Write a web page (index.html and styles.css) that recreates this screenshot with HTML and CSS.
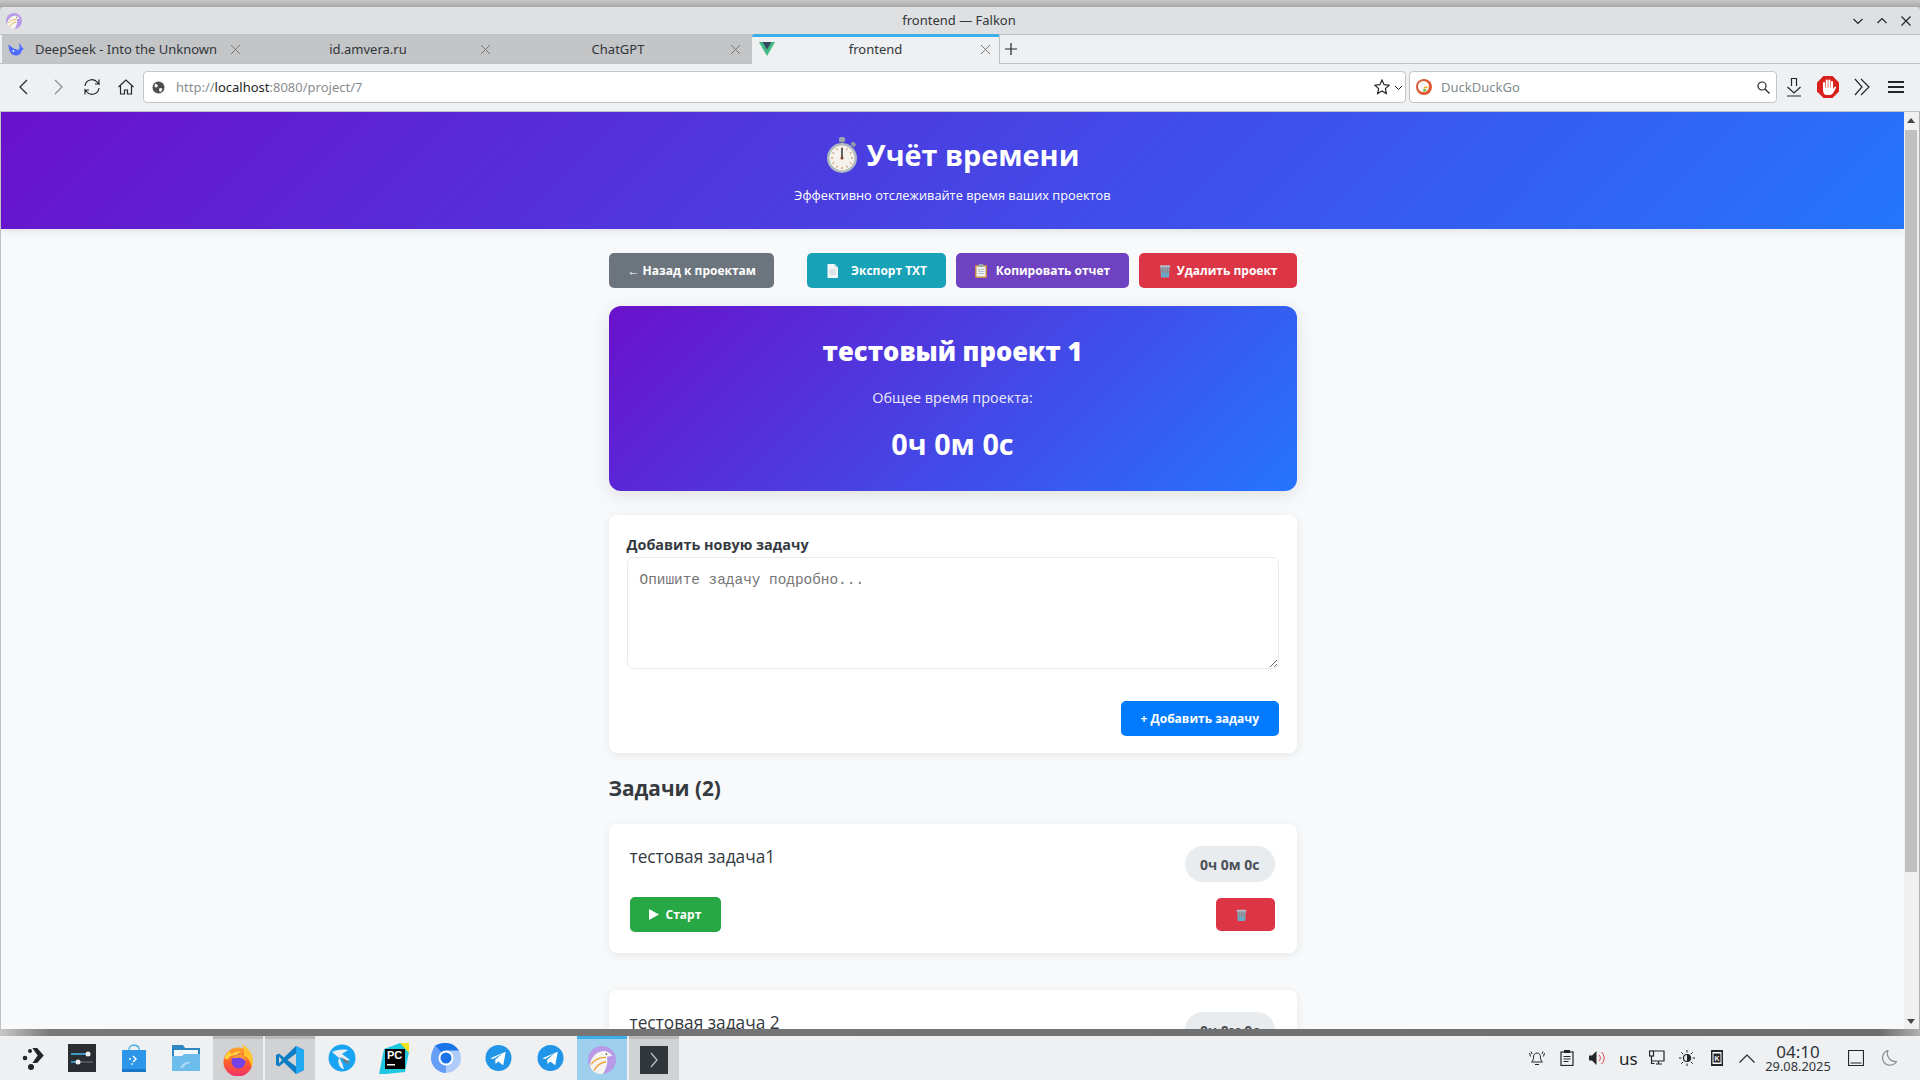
FILE: index.html
```html
<!DOCTYPE html>
<html lang="ru">

<head>
    <meta charset="UTF-8">
    <title>frontend — Falkon</title>
    <link rel="stylesheet" href="styles.css">
</head>

<body>
    <svg class="defs" width="0" height="0">
        <defs>
            <linearGradient id="foxBody" x1="0" y1="0" x2="0" y2="1">
                <stop offset="0" stop-color="#ffa42e"/>
                <stop offset="0.55" stop-color="#ff5a2d"/>
                <stop offset="1" stop-color="#f0306e"/>
            </linearGradient>
        </defs>
        <symbol id="trash" viewBox="0 0 16 16">
            <path d="M2.500 3h11l-1.200 12H3.700z" fill="#9aa3ad"/>
            <path d="M3.200 10h9.600l-.5 5H3.700z" fill="#5fb6d6"/>
            <path d="M5 4l.6 10M8 4v10M11 4l-.6 10M3 6.500h10M3.200 9h9.600" stroke="#777f8a" stroke-width=".6" fill="none"/>
            <rect x="2" y="1.500" width="12" height="2" rx=".8" fill="#b9bfc6"/>
        </symbol>
        <symbol id="telegram" viewBox="0 0 28 28">
            <circle cx="14" cy="14" r="13.500" fill="#2196e8"/>
            <path d="M5.500 14.200L21.500 7.500l-2.600 14-5.200-3.900-2.700 2.700-.5-4.500 8-6.800-10 6.100z" fill="#fff"/>
        </symbol>
        <symbol id="falkon" viewBox="0 0 16 16">
            <circle cx="8" cy="8" r="8" fill="#b79be8"/>
            <path d="M1 11C1.500 7 4.500 3 9 2.800c1.500 0 3 .8 5 2.700l-3.200.6c.8 3.400-.3 6.800-2.300 9.900C5 16.300 2 14.500 1 11z" fill="#f6f4ee"/>
            <path d="M1.800 10.500C4 7.500 7 6.300 10.300 6.500M3.500 14c1.500-3 3.500-4.500 6.800-5" stroke="#eba53c" stroke-width=".8" fill="none"/>
            <circle cx="10.500" cy="4.600" r=".5" fill="#555"/>
        </symbol>
    </svg>

    <div class="desktop-top"></div>

    <div class="titlebar">
        <svg class="title-icon" width="16" height="16"><use href="#falkon"/></svg>
        <span class="title-text">frontend — Falkon</span>
        <div class="win-btns">
            <svg width="12" height="12" viewBox="0 0 12 12"><path d="M1.500 4L6 8.500 10.500 4" class="ln"/></svg>
            <svg width="12" height="12" viewBox="0 0 12 12"><path d="M1.500 8L6 3.500 10.500 8" class="ln"/></svg>
            <svg width="12" height="12" viewBox="0 0 12 12"><path d="M1.500 1.500l9 9M10.500 1.500l-9 9" class="ln"/></svg>
        </div>
    </div>

    <div class="tabbar">
        <div class="tab">
            <svg class="fav" width="16" height="16" viewBox="0 0 16 16">
                <path d="M.5 3.500C.5 9 2.500 14.500 8 14.500c3.500 0 5.500-2.500 5.500-5 1 0 1.800-1 2-2.500l-1.500-.3C13.500 4.500 12.500 3 10.500 2.500c1.500 2 1.500 4.500 0 6.500C7 8.500 3.500 6.500.5 3.500z" fill="#4d6bfe"/>
                <circle cx="5.500" cy="10" r=".9" fill="#fff"/>
            </svg>
            <span class="tab-name">DeepSeek - Into the Unknown</span>
            <span class="tab-x"></span>
        </div>
        <div class="tab">
            <span class="tab-name tab-center">id.amvera.ru</span>
            <span class="tab-x"></span>
        </div>
        <div class="tab">
            <span class="tab-name tab-center">ChatGPT</span>
            <span class="tab-x"></span>
        </div>
        <div class="tab tab-active">
            <svg class="fav" width="16" height="16" viewBox="0 0 16 16">
                <path d="M0 1h16L8 15z" fill="#41b883"/>
                <path d="M3.500 1h9L8 8.500z" fill="#34495e"/>
            </svg>
            <span class="tab-name tab-center">frontend</span>
            <span class="tab-x"></span>
        </div>
        <svg class="new-tab" width="12" height="12" viewBox="0 0 12 12"><path d="M6 0v12M0 6h12" class="ln"/></svg>
    </div>

    <div class="toolbar">
        <div class="nav-btns">
            <svg width="20" height="20" viewBox="0 0 20 20"><path d="M13 3l-7 7 7 7" class="ln"/></svg>
            <svg width="20" height="20" viewBox="0 0 20 20"><path d="M7 3l7 7-7 7" class="ln ln-off"/></svg>
            <svg width="20" height="20" viewBox="0 0 20 20"><path d="M3 9a7 7 0 0 1 12.500-3.500L17 7V2.500M17 11a7 7 0 0 1-12.500 3.500L3 13v4.500M17 7h-4M3 13h4" class="ln"/></svg>
            <svg class="home" width="18" height="18" viewBox="0 0 18 18"><path d="M1.500 9L9 2l7.500 7M3.500 8v8h4v-4h3v4h4V8" class="ln"/></svg>
        </div>
        <div class="urlbar">
            <svg width="13" height="13" viewBox="0 0 13 13">
                <circle cx="6.500" cy="6.500" r="6" fill="#4d4d4d"/>
                <path d="M3 2.500l3 1.500-1 2.500L2.500 6zM7.500 7l3 .5L9 11 7 10z" fill="#fff"/>
            </svg>
            <span class="url"><span class="url-dim">http://</span>localhost<span class="url-dim">:8080/project/7</span></span>
            <svg class="star" width="16" height="16" viewBox="0 0 16 16"><path d="M8 1l2.100 4.700 5 .5-3.700 3.400 1 5L8 12l-4.400 2.600 1-5L.9 6.200l5-.5z" class="ln"/></svg>
            <svg width="9" height="9" viewBox="0 0 9 9"><path d="M1 3l3.500 3.500L8 3" class="ln ln-thin"/></svg>
        </div>
        <div class="searchbar">
            <svg width="16" height="16" viewBox="0 0 16 16">
                <circle cx="8" cy="8" r="8" fill="#de5833"/>
                <circle cx="7.500" cy="7.500" r="5.500" fill="#fff"/>
                <path d="M5 4c2-1 4 0 4 2.500 0 1.500.5 3 .5 5.500-1.500 1-3 1-3.500 0C6 9.500 5.500 7 5 4z" fill="#f5f5f5" stroke="#ddd" stroke-width=".4"/>
                <path d="M8 8l3.500-.8v1.800L8 9.500z" fill="#f2b01e"/>
                <path d="M7 10.500l3-.5.500 1.500-3 1z" fill="#5cb531"/>
            </svg>
            <span class="search-name">DuckDuckGo</span>
            <svg class="search-ico" width="13" height="13" viewBox="0 0 13 13"><circle cx="5" cy="5" r="4" class="ln"/><path d="M8 8l4.500 4.500" class="ln"/></svg>
        </div>
        <div class="tool-btns">
            <svg width="16" height="20" viewBox="0 0 16 20"><path d="M5.500 9V1.500h5V9M1.500 10l6.500 6 6.500-6M1 19h14" class="ln"/></svg>
            <svg width="22" height="22" viewBox="0 0 22 22">
                <path d="M6.500 0h9L22 6.500v9L15.500 22h-9L0 15.500v-9z" fill="#d8201c"/>
                <path d="M7 12V7M9.700 11V4.500M12.400 11V4.500M15 12V6" stroke="#fff" stroke-width="2.100" stroke-linecap="round"/>
                <path d="M6 11.500h10v1.500l1.500-2c.9-1 2 0 1.400 1l-2.500 4.500c-.8 1.600-2 2.500-3.500 2.500H10c-2.500 0-4-2-4-5z" fill="#fff"/>
            </svg>
            <svg class="more" width="16" height="18" viewBox="0 0 16 18"><path d="M1 1l7 8-7 8M7 1l8 8-8 8" class="ln"/></svg>
            <div class="burger"><i></i><i></i><i></i></div>
        </div>
    </div>

    <div class="viewport">
        <div class="page">
            <header class="app-header">
                <h1>
                    <svg class="emoji-watch" width="32" height="36" viewBox="0 0 32 36">
                        <rect x="13" y="0" width="6" height="5" rx="1.500" fill="#9aa5ad"/>
                        <rect x="15" y="4" width="2" height="4" fill="#7c878f"/>
                        <rect x="25" y="5" width="5" height="4" rx="1.500" transform="rotate(40 27 7)" fill="#8f9aa2"/>
                        <circle cx="16" cy="21" r="15" fill="#aeb8bf"/>
                        <circle cx="16" cy="21" r="12.500" fill="#f4f2ec"/>
                        <path d="M16 10v2M16 30v2M5 21h2M25 21h2M10.500 11.500l1 1.700M21.500 11.500l-1 1.700M10.500 30.500l1-1.700M21.500 30.500l-1-1.700M6.500 15.500l1.700 1M25.500 15.500l-1.700 1M6.500 26.500l1.700-1M25.500 26.500l-1.700-1" stroke="#c9763e" stroke-width="1"/>
                        <path d="M16 11v11" stroke="#333" stroke-width="1.500"/>
                        <circle cx="16" cy="21" r="1.500" fill="#8a3b2a"/>
                    </svg>
                    Учёт времени
                </h1>
                <p>Эффективно отслеживайте время ваших проектов</p>
            </header>

            <main class="container">
                <div class="actions">
                    <button class="btn btn-gray">← Назад к проектам</button>
                    <div class="actions-right">
                        <button class="btn btn-teal">
                            <svg width="13" height="14" viewBox="0 0 13 14"><path d="M1.500 0H8.500l3.500 3.500V14H1.500z" fill="#f2f6f8"/><path d="M8.500 0v3.500H12z" fill="#c9d6dc"/><path d="M3.500 6h6M3.500 8h6M3.500 10h6" stroke="#b4c4cc" stroke-width=".8"/></svg>
                            Экспорт TXT
                        </button>
                        <button class="btn btn-purple">
                            <svg width="12" height="14" viewBox="0 0 12 14"><rect x="0" y="1" width="12" height="13" rx="1" fill="#c78a45"/><rect x="1.500" y="2.500" width="9" height="10" fill="#eef1f3"/><rect x="3.500" y="0" width="5" height="3" rx=".8" fill="#9ba6ae"/><path d="M3 5.500h6M3 7.500h6M3 9.500h6" stroke="#a9b3ba" stroke-width=".8"/></svg>
                            Копировать отчет
                        </button>
                        <button class="btn btn-red btn-drop">
                            <svg width="14" height="14"><use href="#trash"/></svg>
                            Удалить проект
                        </button>
                    </div>
                </div>

                <section class="project-card">
                    <h2>тестовый проект 1</h2>
                    <p>Общее время проекта:</p>
                    <div class="project-time">0ч 0м 0с</div>
                </section>

                <section class="task-form">
                    <label for="taskText">Добавить новую задачу</label>
                    <textarea id="taskText" placeholder="Опишите задачу подробно..."></textarea>
                    <div class="form-foot">
                        <button class="btn btn-blue">+ Добавить задачу</button>
                    </div>
                </section>

                <h3 class="tasks-title">Задачи (2)</h3>

                <article class="task">
                    <div class="task-top">
                        <span class="task-name">тестовая задача1</span>
                        <span class="task-time">0ч 0м 0с</span>
                    </div>
                    <div class="task-bottom">
                        <button class="btn btn-green">
                            <svg width="10" height="11" viewBox="0 0 10 11"><path d="M0 0l10 5.500L0 11z" fill="#fff"/></svg>
                            Старт
                        </button>
                        <button class="btn btn-red btn-del">
                            <svg width="13" height="14"><use href="#trash"/></svg>
                        </button>
                    </div>
                </article>

                <article class="task">
                    <div class="task-top">
                        <span class="task-name">тестовая задача 2</span>
                        <span class="task-time">0ч 0м 0с</span>
                    </div>
                </article>
            </main>
        </div>
        <div class="scrollbar">
            <span class="arrow-up"></span>
            <div class="thumb"></div>
            <span class="arrow-down"></span>
        </div>
    </div>

    <div class="window-shadow"></div>

    <footer class="taskbar">
        <div class="launcher">
            <div class="slot slot-first">
                <svg width="24" height="24" viewBox="0 0 24 24">
                    <path d="M12 2l5 0 7 8-7 8h-5l5.500-8z" fill="#232629" transform="translate(-1 0) scale(.95)"/>
                    <circle cx="8" cy="5" r="2" fill="#232629"/>
                    <circle cx="3" cy="12" r="2.300" fill="#232629"/>
                    <circle cx="9" cy="21" r="3" fill="#232629"/>
                </svg>
            </div>
            <div class="slot">
                <svg width="28" height="28" viewBox="0 0 28 28">
                    <rect width="28" height="28" fill="#2a2e32"/>
                    <path d="M3 10h17M9 18h16" stroke="#5b6065" stroke-width="1.500"/>
                    <path d="M3 10h17M3 18h7" stroke="#3daee9" stroke-width="1.500"/>
                    <circle cx="20" cy="10" r="2.500" fill="#eff0f1"/>
                    <circle cx="10" cy="18" r="2.500" fill="#eff0f1"/>
                </svg>
            </div>
            <div class="slot">
                <svg width="24" height="28" viewBox="0 0 24 28">
                    <path d="M7 8V5c0-5 10-5 10 0v3" stroke="#3daee9" stroke-width="1.300" fill="none"/>
                    <rect y="6" width="24" height="22" fill="#2b96ea"/>
                    <rect y="25" width="24" height="3" fill="#1976c9"/>
                    <path d="M11 12l3 3-3 3" stroke="#fff" stroke-width="1.500" fill="none"/>
                    <circle cx="8" cy="15" r="1" fill="#fff"/>
                    <circle cx="10" cy="20" r="1" fill="#cde8fb"/>
                </svg>
            </div>
            <div class="slot">
                <svg width="28" height="26" viewBox="0 0 28 26">
                    <path d="M0 0h11l2 3h15v23H0z" fill="#2e86c1"/>
                    <rect x="2" y="5" width="24" height="7" fill="#f4f7fa"/>
                    <path d="M0 11h10l2-2h16v17H0z" fill="#6cbcec"/>
                    <path d="M8 23c2-5 6-7 11-6-1 1-3 2-5 2.500L11 23z" fill="#a8d9f5"/>
                </svg>
            </div>
            <div class="slot slot-on">
                <svg width="30" height="32" viewBox="0 0 30 32">
                    <circle cx="15" cy="18" r="14.500" fill="url(#foxBody)"/>
                    <path d="M19 0c6 4 11 9 11 17 0 2-.5 4-1.500 6-.5-5-3-9-7.500-11.500C21.500 8 21 4 19 0z" fill="#ffc42e"/>
                    <path d="M1.500 14C3 10 5 8 7 7c0 1.500.5 2.500 1.500 3 2.500-2 6-3 9.500-2-2 .8-3.500 1.800-4 3-4 0-7 .5-8.500 3.500-.5 1-2.500 1-4.500-.5z" fill="#ffd23a"/>
                    <circle cx="15.500" cy="17.500" r="7" fill="#7542e5"/>
                    <path d="M9 14c2-3 6-4 10-3 3 1 4 4 3.500 6.500C21 14.500 18 13.500 15 13.800c-2.500.2-4.500.5-6 .2z" fill="#ff9b2d"/>
                </svg>
            </div>
            <div class="slot slot-on">
                <svg width="28" height="28" viewBox="0 0 28 28">
                    <path d="M20 0l8 4v20l-8 4-12-11.500L3 20.500 0 19V9l3-1.500 5 4z" fill="#0f7dc4"/>
                    <path d="M20 0l8 4v20l-8 4z" fill="#23a9f2"/>
                    <path d="M20 7.500L11.500 14l8.500 6.500z" fill="#d2d4d6"/>
                    <path d="M3 10.500L6 14l-3 3.500z" fill="#d2d4d6"/>
                </svg>
            </div>
            <div class="slot">
                <svg width="28" height="28" viewBox="0 0 28 28">
                    <circle cx="14" cy="14" r="13.500" fill="#18a4f2"/>
                    <path d="M4 8c4-2 9-3 16-2l-6 4 8 6-4 1-7-4 3 6 2 6c-4 0-7-6-5-11z" fill="#e9eef2"/>
                    <path d="M13 13l7 4 2 3-5-1z" fill="#6d7d8b"/>
                </svg>
            </div>
            <div class="slot">
                <svg width="32" height="32" viewBox="0 0 32 32">
                    <path d="M6 7L22 1l9 0 0 9-4 20-19 2H1z" fill="#1fc7e0"/>
                    <path d="M22 1h9v10z" fill="#f3e21f"/>
                    <rect x="7" y="7" width="20" height="20" fill="#000"/>
                    <text x="9" y="17" class="pc-text">PC</text>
                    <rect x="9" y="22" width="8" height="1.500" fill="#fff"/>
                </svg>
            </div>
            <div class="slot">
                <svg width="30" height="30" viewBox="0 0 30 30">
                    <circle cx="15" cy="15" r="15" fill="#aecbfa"/>
                    <path d="M15 15L4 2.500C8 .500 11 0 15 0c5.500 0 10 3 13 7.500H15z" fill="#1a73e8"/>
                    <path d="M15 15L15 30C7 30 0 23 0 15c0-5 2-9 4-12.500z" fill="#669df6"/>
                    <circle cx="15" cy="15" r="7.500" fill="#fff"/>
                    <circle cx="15" cy="15" r="5.500" fill="#1a73e8"/>
                </svg>
            </div>
            <div class="slot"><svg width="27" height="28"><use href="#telegram"/></svg></div>
            <div class="slot"><svg width="27" height="28"><use href="#telegram"/></svg></div>
            <div class="slot slot-active">
                <svg width="28" height="28"><use href="#falkon"/></svg>
            </div>
            <div class="slot slot-on">
                <svg width="28" height="28" viewBox="0 0 28 28">
                    <rect width="28" height="28" fill="#31363b"/>
                    <path d="M11 7l6 7-6 7" stroke="#bcc0c3" stroke-width="1.300" fill="none"/>
                </svg>
            </div>
        </div>

        <div class="tray">
            <svg width="16" height="16" viewBox="0 0 16 16"><path d="M2.500 12c1.500-1 2-2.500 2-5 0-2.200 1.300-4 3.500-4s3.500 1.800 3.500 4c0 2.500.5 4 2 5zM6 14.500h4M1.500 6.500L.500 3M14.500 6.500l1-3.500M3 4L2 1.500M13 4l1-2.500" class="ln ln-thin"/></svg>
            <svg class="tray-clip" width="14" height="16" viewBox="0 0 14 16"><rect x="1" y="2" width="12" height="13.500" class="ln"/><rect x="4" y="0" width="6" height="3" fill="#232629"/><path d="M3.500 6.500h7M3.500 9h7M3.500 11.500h5" class="ln"/></svg>
            <svg width="16" height="16" viewBox="0 0 16 16"><path d="M0 5.500h3L7.500 1v14L3 10.500H0z" fill="#232629"/><path d="M10 5a4 4 0 0 1 0 6M12.500 2a8 8 0 0 1 0 12" fill="none" stroke="#da4453" stroke-width="1"/></svg>
            <span class="tray-text">us</span>
            <svg width="16" height="16" viewBox="0 0 16 16"><path d="M5 1h10v10H3M7 14h6" class="ln"/><path d="M9.500 11v3" class="ln"/><rect x=".500" y="1" width="4" height="5" class="ln"/><path d="M2.500 6v7.500h3" class="ln"/></svg>
            <svg width="16" height="16" viewBox="0 0 16 16"><circle cx="8" cy="8" r="3.500" class="ln"/><path d="M8 4.500a3.500 3.500 0 0 1 0 7z" fill="#232629"/><path d="M8 0v2.500M8 13.500V16M0 8h2.500M13.500 8H16M2.300 2.300l1.800 1.800M11.900 11.900l1.800 1.800M2.300 13.700l1.800-1.800M11.900 4.100l1.800-1.800" class="ln ln-thin"/></svg>
            <svg class="tray-k" width="16" height="20" viewBox="0 0 16 20"><rect x="2" y="2" width="12" height="16" fill="#232629"/><rect x="3.500" y="4" width="9" height="12" fill="#fff"/><rect x="4.500" y="5.500" width="7" height="9" fill="#232629"/><text x="8" y="13" class="k-text">K</text></svg>
            <svg width="16" height="9" viewBox="0 0 16 9"><path d="M.500 8.500L8 1l7.500 7.500" class="ln"/></svg>
            <div class="clock">
                <span class="clock-time">04:10</span>
                <span class="clock-date">29.08.2025</span>
            </div>
            <svg class="tray-desk" width="16" height="16" viewBox="0 0 16 16"><path d="M.500.500h15v15H.500zM2.500 13h11" class="ln"/></svg>
            <svg class="tray-moon" width="16" height="16" viewBox="0 0 16 16"><path d="M7 .500A7.500 7.500 0 1 0 15.500 11.500 8 8 0 0 1 7 .500z" class="ln ln-off"/></svg>
        </div>
    </footer>
</body>

</html>
```

FILE: styles.css
```css
* {
    box-sizing: border-box;
}

html,
body {
    height: 100%;
}

body {
    margin: 0;
    display: flex;
    flex-direction: column;
    height: 1080px;
    overflow: hidden;
    font-family: 'Noto Sans', sans-serif;
    color: #232629;
    background-color: #b4b4b4;
}

.defs {
    position: absolute;
}

.ln {
    fill: none;
    stroke: #232629;
    stroke-width: 1.2;
}

.ln-thin {
    stroke-width: 1;
}

.ln-off {
    stroke: #8a8d90;
}

/* window frame */
.desktop-top {
    height: 7px;
    flex: none;
    background: linear-gradient(#c6c6c6, #a9a9a9);
}

.titlebar {
    height: 27px;
    flex: none;
    display: grid;
    grid-template-columns: 1fr auto 1fr;
    align-items: center;
    padding: 0 8px 0 6px;
    background-color: #dee0e2;
    border-radius: 4px 4px 0 0;
}

.title-text {
    text-align: center;
    font-size: 13px;
    padding-bottom: 1px;
    color: #31363b;
}

.win-btns {
    display: flex;
    justify-content: flex-end;
    gap: 12px;
}

.tabbar {
    height: 30px;
    flex: none;
    display: flex;
    padding-left: 2px;
    background-color: #eff0f1;
    border-top: 1px solid #bfc1c3;
    border-bottom: 1px solid #bfc1c3;
}

.tab {
    width: 250px;
    display: flex;
    align-items: center;
    padding: 0 12px 0 6px;
    background-color: #c4c5c7;
    font-size: 13px;
    color: #31363b;
}

.tab-active {
    width: 248px;
    margin-top: -1px;
    margin-bottom: -1px;
    padding: 0 9px 3px 7px;
    background-color: #eff0f1;
    border-top: 3px solid #3daee9;
    border-right: 1px solid #bfc1c3;
    border-radius: 3px 3px 0 0;
}

.fav {
    flex: none;
}

.tab-name {
    flex: 1;
    padding-left: 11px;
    white-space: nowrap;
}

.tab-center {
    text-align: center;
    padding-left: 0;
    padding-right: 3px;
}

.tab-active .tab-center {
    padding-right: 5px;
}

.tab-x {
    width: 9px;
    height: 9px;
    flex: none;
    background:
        linear-gradient(45deg, transparent 46%, #777 46%, #777 54%, transparent 54%),
        linear-gradient(-45deg, transparent 46%, #777 46%, #777 54%, transparent 54%);
}

.new-tab {
    margin: 8px 0 0 5px;
}

.toolbar {
    height: 48px;
    flex: none;
    display: flex;
    align-items: center;
    padding-bottom: 1px;
    background-color: #eff0f1;
    border-bottom: 1px solid #bfc1c3;
}

.nav-btns {
    width: 143px;
    flex: none;
    display: flex;
    align-items: center;
    gap: 14px;
    padding-left: 14px;
}

.home {
    margin-left: 1px;
}

.urlbar,
.searchbar {
    height: 32px;
    display: flex;
    align-items: center;
    background-color: #fff;
    border: 1px solid #c3c5c7;
    border-radius: 4px;
    font-size: 13px;
}

.urlbar {
    width: 1263px;
    flex: none;
    padding: 0 2px 0 8px;
}

.url {
    flex: 1;
    padding-left: 11px;
    color: #232629;
}

.url-dim {
    color: #8a8d90;
}

.star {
    margin-right: 4px;
}

.searchbar {
    width: 368px;
    flex: none;
    margin-left: 3px;
    padding: 0 6px 0 6px;
}

.search-name {
    flex: 1;
    padding-left: 9px;
    color: #7f8c8d;
}

.tool-btns {
    flex: 1;
    display: flex;
    align-items: center;
    justify-content: space-between;
    padding: 0 16px 0 9px;
}

.more {
    margin-right: 3px;
}

.burger {
    width: 16px;
    display: flex;
    flex-direction: column;
    gap: 3px;
}

.burger i {
    display: block;
    height: 2px;
    background-color: #232629;
}

/* page inside the browser */
.viewport {
    height: 917px;
    flex: none;
    display: flex;
    background-color: #f8f9fa;
    border-left: 1px solid #bfc1c3;
}

.page {
    flex: 1;
    min-width: 0;
    overflow: hidden;
    font-family: 'Open Sans', 'Noto Sans', sans-serif;
}

.scrollbar {
    width: 16px;
    flex: none;
    display: flex;
    flex-direction: column;
    align-items: center;
    padding: 6px 2px 5px 1px;
    background-color: #f0f0f0;
    border-right: 1px solid #b0b0b0;
}

.arrow-up,
.arrow-down {
    width: 0;
    height: 0;
    border-left: 4px solid transparent;
    border-right: 4px solid transparent;
}

.arrow-up {
    border-bottom: 5px solid #444;
}

.arrow-down {
    margin-top: auto;
    border-top: 5px solid #444;
}

.thumb {
    width: 12px;
    height: 742px;
    margin-top: 7px;
    background-color: #c0c0c0;
}

.app-header {
    height: 117px;
    padding-top: 21px;
    text-align: center;
    color: #fff;
    background: linear-gradient(135deg, #6a11cb, #2575fc);
    box-shadow: 0 2px 10px rgba(0, 0, 0, 0.1);
}

.app-header h1 {
    margin: 0;
    display: flex;
    align-items: center;
    justify-content: center;
    gap: 9px;
    font-size: 28.800px;
    line-height: 44px;
    font-weight: 700;
}

.app-header p {
    margin: 9px 0 0;
    font-size: 12.800px;
    line-height: 18px;
}

.container {
    width: 688px;
    margin: 0 auto;
    padding-top: 24px;
}

.actions {
    display: flex;
    justify-content: space-between;
    margin-bottom: 18px;
}

.actions-right {
    display: flex;
    gap: 9.600px;
}

.btn {
    height: 35px;
    display: inline-flex;
    align-items: center;
    gap: 7px;
    padding: 0 19px;
    border: none;
    border-radius: 5px;
    color: #fff;
    font-family: 'Open Sans', 'Noto Sans', sans-serif;
    font-size: 12px;
    font-weight: 700;
    white-space: nowrap;
}

.btn-gray {
    padding-right: 18px;
    background-color: #6c757d;
}

.btn-teal {
    gap: 12px;
    background-color: #17a2b8;
}

.btn-purple {
    gap: 9px;
    background-color: #6f42c1;
}

.btn-red {
    background-color: #dc3545;
}

.btn-drop {
    gap: 5px;
}

.btn-blue {
    padding: 0 19.500px;
    background-color: #007bff;
}

.btn-green {
    padding-right: 20px;
    background-color: #28a745;
}

.project-card {
    height: 185px;
    padding-top: 27px;
    text-align: center;
    color: #fff;
    border-radius: 12px;
    background: linear-gradient(135deg, #6a11cb, #2575fc);
    box-shadow: 0 4px 20px rgba(0, 0, 0, 0.1);
}

.project-card h2 {
    margin: 0;
    font-size: 25.600px;
    line-height: 38px;
    font-weight: 800;
}

.project-card p {
    margin: 17px 0 0;
    font-size: 14.400px;
    line-height: 20px;
    opacity: 0.9;
}

.project-time {
    margin-top: 17px;
    font-size: 28.800px;
    line-height: 38px;
    font-weight: 700;
}

.task-form {
    height: 238px;
    margin-top: 24px;
    padding: 20px 18px 0;
    background-color: #fff;
    border-radius: 8px;
    box-shadow: 0 2px 10px rgba(0, 0, 0, 0.08);
}

.task-form label {
    display: block;
    font-size: 14.400px;
    line-height: 20px;
    font-weight: 700;
    color: #343a40;
}

.task-form textarea {
    display: block;
    width: 100%;
    height: 112px;
    margin-top: 2px;
    padding: 14px 12px 12px;
    border: 1px solid #e9ecef;
    border-radius: 6px;
    background-color: #fff;
    font-family: 'Liberation Mono', monospace;
    font-size: 14.400px;
}

.task-form textarea::placeholder {
    color: #757575;
}

.form-foot {
    display: flex;
    justify-content: flex-end;
    margin-top: 32px;
}

.tasks-title {
    margin: 20px 0 0;
    font-size: 20.800px;
    line-height: 30px;
    font-weight: 700;
    color: #343a40;
}

.task {
    height: 129px;
    margin-top: 21px;
    padding: 22px 22px 0 21px;
    background-color: #fff;
    border-radius: 8px;
    box-shadow: 0 2px 10px rgba(0, 0, 0, 0.08);
}

.task + .task {
    margin-top: 37px;
}

.task-top {
    display: flex;
    justify-content: space-between;
    align-items: flex-start;
}

.task-name {
    font-size: 17.300px;
    line-height: 22px;
    color: #343a40;
}

.task-time {
    height: 36px;
    display: flex;
    align-items: center;
    padding: 0 15px;
    border-radius: 18px;
    background-color: #e9ecef;
    font-size: 14px;
    font-weight: 700;
    color: #495057;
}

.task-bottom {
    display: flex;
    justify-content: space-between;
    align-items: center;
    margin-top: 15px;
}

.btn-del {
    width: 59px;
    height: 33px;
    padding: 0 7px 0 0;
    justify-content: center;
}

/* desktop panel */
.window-shadow {
    height: 7px;
    flex: none;
    background: linear-gradient(90deg, #c8c8c8, #787878 50px, #6e6e6e 1880px, #b0b0b0);
}

.taskbar {
    flex: 1;
    display: flex;
    align-items: stretch;
    justify-content: space-between;
    background-color: #eff0f1;
}

.launcher {
    display: flex;
    gap: 2px;
    padding-left: 5px;
}

.slot {
    width: 50px;
    display: flex;
    align-items: center;
    justify-content: center;
}

.slot-first {
    padding-left: 8px;
}

.slot-on {
    background-color: #d0d2d3;
    border-top: 3px solid #b8babb;
}

.slot-active {
    background-color: #9ed0ee;
    border-top: 3px solid #3daee9;
}

.pc-text {
    font-family: 'Liberation Sans', sans-serif;
    font-size: 11px;
    font-weight: 700;
    fill: #fff;
}

.k-text {
    font-family: 'Liberation Sans', sans-serif;
    font-size: 7px;
    font-weight: 700;
    text-anchor: middle;
    fill: #fff;
}

.tray {
    display: flex;
    align-items: center;
    gap: 14px;
    padding-right: 23px;
}

.tray-clip {
    margin: 0 1px;
}

.tray-text {
    width: 16px;
    font-size: 17px;
    text-align: center;
}

.clock {
    width: 68px;
    margin: 0 -6px 0 -5px;
    display: flex;
    flex-direction: column;
    align-items: center;
    color: #31363b;
}

.clock-time {
    font-size: 17px;
    line-height: 17px;
}

.clock-date {
    font-size: 12.800px;
    line-height: 13px;
}

.tray-desk {
    margin-left: 8px;
    margin-right: 3px;
}
```
